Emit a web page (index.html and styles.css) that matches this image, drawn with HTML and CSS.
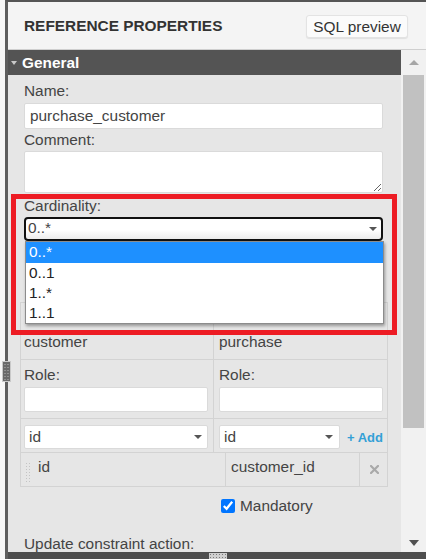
FILE: index.html
```html
<!DOCTYPE html>
<html lang="en">
<head>
<meta charset="utf-8">
<title>Reference properties</title>
<link rel="stylesheet" href="styles.css">
</head>
<body>
<div class="app">
  <div class="frame">
    <header class="hdr">
      <h1 class="hdr-title">REFERENCE PROPERTIES</h1>
      <button class="btn" type="button">SQL preview</button>
    </header>
    <div class="main">
      <div class="content">
        <div class="section-title"><span class="caret"></span>General</div>
        <div class="form">
          <label class="lbl">Name:</label>
          <input class="field" type="text" value="purchase_customer">
          <label class="lbl lbl-gap">Comment:</label>
          <textarea class="field area"></textarea>
          <label class="lbl lbl-gap2">Cardinality:</label>
          <div class="select focus">
            <span class="select-text">0..*</span>
            <span class="arrow arrow-card"></span>
            <ul class="dropdown">
              <li class="opt opt-first sel">0..*</li>
              <li class="opt">0..1</li>
              <li class="opt">1..*</li>
              <li class="opt">1..1</li>
            </ul>
          </div>

          <div class="reftable">
            <div class="cell c-left r1">customer</div>
            <div class="cell c-right r1">purchase</div>
            <div class="cell c-left r2">
              <span class="lbl">Role:</span>
              <input class="field small" type="text" value="">
            </div>
            <div class="cell c-right r2">
              <span class="lbl">Role:</span>
              <input class="field small" type="text" value="">
            </div>
            <div class="cell c-left r3">
              <div class="select plain wide"><span class="select-text">id</span><span class="arrow"></span></div>
            </div>
            <div class="cell c-right r3 addrow">
              <div class="select plain narrow"><span class="select-text">id</span><span class="arrow"></span></div>
              <a class="add" href="#">+ Add</a>
            </div>
          </div>

          <div class="coltable">
            <div class="cell col1"><span class="dots"></span><span class="coltext">id</span></div>
            <div class="cell col2">customer_id</div>
            <div class="cell col3">
              <svg class="remove" width="9" height="9" viewBox="0 0 9 9" aria-label="remove"><path d="M1 1 L8 8 M8 1 L1 8" stroke="#a9a9a9" stroke-width="2.2" stroke-linecap="square"/></svg>
            </div>
          </div>

          <div class="check-row">
            <input class="check" type="checkbox" checked id="mand">
            <label for="mand">Mandatory</label>
          </div>

          <label class="lbl lbl-update">Update constraint action:</label>
        </div>
      </div>
      <div class="scrollbar">
        <div class="sb-btn sb-up"><span class="tri-up"></span></div>
        <div class="sb-thumb"></div>
        <div class="sb-space"></div>
        <div class="sb-btn sb-down"><span class="tri-down"></span></div>
      </div>
    </div>
    <div class="footer-bar"></div>
  </div>
  <span class="side-grip"></span>
  <span class="bottom-grip"></span>
  <div class="annotation"></div>
</div>
</body>
</html>
```

FILE: styles.css
```css
* { box-sizing: border-box; }
html, body { margin: 0; padding: 0; }
body {
  width: 426px;
  height: 559px;
  overflow: hidden;
  background: #f7f7f7;
  font-family: "Liberation Sans", Arial, sans-serif;
  font-size: 15.4px;
  color: #444;
}
.app { position: relative; width: 426px; height: 559px; }
.frame {
  margin-left: 5px;
  height: 559px;
  border-left: 3px solid #5e5e5e;
  border-top: 2px solid #555;
  display: flex;
  flex-direction: column;
}
.hdr {
  height: 48px;
  flex: none;
  background: #f4f4f4;
  border-bottom: 1px solid #cfcfcf;
  display: flex;
  align-items: center;
  justify-content: space-between;
  padding: 0 18px 0 16px;
}
.hdr-title { margin: 0; font-size: 15.4px; font-weight: bold; color: #333; }
.btn {
  font-family: inherit;
  font-size: 15.4px;
  color: #333;
  background: #fbfbfb;
  border: 1px solid #e3e3e3;
  border-radius: 3px;
  height: 23px;
  width: 102px;
  padding: 0;
  margin-top: 2px;
  box-shadow: 0 1px 1px rgba(0,0,0,.08);
}
.main { flex: 1; min-height: 0; display: flex; }
.content { flex: 1; overflow: hidden; background: #e6e6e6; }
.section-title {
  height: 25px;
  background: #545454;
  color: #fff;
  font-weight: bold;
  display: flex;
  align-items: center;
  padding-left: 3px;
}
.caret {
  width: 0; height: 0;
  border-left: 3.5px solid transparent;
  border-right: 3.5px solid transparent;
  border-top: 4px solid #c8c8c8;
  margin-right: 5px;
}
.form { padding: 7px 18px 0 16px; }
.lbl { display: block; line-height: 18px; color: #444; }
.lbl-gap { margin-top: 2px; }
.lbl-gap2 { margin-top: 4px; }
.field {
  display: block;
  width: 100%;
  height: 26px;
  margin: 3px 0 0;
  border: 1px solid #dadada;
  border-radius: 2px;
  background: #fff;
  padding: 0 5px;
  font-family: inherit;
  font-size: 15.4px;
  color: #444;
  outline: none;
}
.area { height: 42px; margin-top: 2px; resize: vertical; padding: 3px 5px; }
.select {
  position: relative;
  display: flex;
  align-items: center;
  background: #fff;
  color: #444;
}
.select.focus {
  height: 24px;
  margin-top: 2px;
  border: 2px solid #111;
  border-radius: 4px;
  background: linear-gradient(#fff 55%, #ececec);
  padding: 0 4px 3px 2px;
}
.select-text { line-height: 18px; }
.arrow {
  margin-left: auto;
  width: 0; height: 0;
  border-left: 4.5px solid transparent;
  border-right: 4.5px solid transparent;
  border-top: 4.5px solid #555;
}
.arrow-card { margin-top: 3px; border-left-width: 4px; border-right-width: 4px; border-top-width: 4px; }
.dropdown {
  position: absolute;
  top: calc(100% + 2px);
  left: -1px;
  right: -3px;
  margin: 0;
  padding: 0;
  list-style: none;
  background: #fff;
  border: 1px solid #8c8c8c;
  box-shadow: 1px 2px 3px rgba(0,0,0,.35);
  z-index: 5;
}
.opt { line-height: 20px; padding: 0 3px; color: #222; }
.opt-first { padding-bottom: 1px; }
.opt.sel { background: #1e90ff; color: #fff; }

.reftable {
  margin: 61px -5px 0 -4px;
  display: grid;
  grid-template-columns: 193px 174px;
  grid-template-rows: 57px 59px 34px;
  border-top: 1px solid #d3d3d3;
  border-left: 1px solid #d3d3d3;
}
.cell { border-right: 1px solid #d3d3d3; border-bottom: 1px solid #d3d3d3; }
.c-left { padding-left: 3px; padding-right: 5px; }
.c-right { padding-left: 5px; padding-right: 4px; }
.r1 { padding-top: 30px; line-height: 18px; }
.r2 { padding-top: 6px; }
.field.small { height: 25px; }
.r3 { padding-top: 6px; }
.select.plain {
  height: 24px;
  border: 1px solid #dadada;
  border-radius: 2px;
  padding: 0 5px 0 4px;
}
.addrow { display: flex; align-items: flex-start; }
.select.narrow { width: 121px; }
.select.narrow .arrow { margin-right: 1px; }
.add {
  margin-left: 7px;
  margin-top: 6px;
  font-size: 13px;
  font-weight: bold;
  color: #33a0d6;
  text-decoration: none;
  line-height: 14px;
}

.coltable {
  margin: 0 -5px 0 -4px;
  display: grid;
  grid-template-columns: 205px 134px 28px;
  grid-template-rows: 34px;
  border-left: 1px solid #d3d3d3;
}
.col1 { display: flex; align-items: flex-start; padding: 5px 0 0 4px; line-height: 18px; }
.dots {
  width: 6px;
  height: 20px;
  margin-top: 4px;
  margin-right: 7px;
  background-image: radial-gradient(circle, #c4c4c4 0.8px, transparent 1px);
  background-size: 3px 3px;
}
.coltext { line-height: 18px; }
.col2 { padding: 5px 0 0 5px; line-height: 18px; }
.col3 { display: flex; align-items: center; justify-content: center; padding-left: 1px; }

.check-row { display: flex; align-items: center; height: 18px; margin: 10px 0 0 197px; }
.check { width: 14px; height: 14px; margin: 0 5px 0 0; }
.lbl-update { margin-top: 20px; white-space: nowrap; }

.scrollbar { width: 25px; flex: none; background: #f1f1f1; display: flex; flex-direction: column; }
.sb-btn { display: flex; align-items: center; justify-content: center; flex: none; }
.sb-up { height: 25px; }
.sb-down { height: 18px; }
.tri-up {
  width: 0; height: 0;
  border-left: 5.5px solid transparent;
  border-right: 5.5px solid transparent;
  border-bottom: 5.5px solid #a6a6a6;
}
.tri-down {
  width: 0; height: 0;
  border-left: 5.5px solid transparent;
  border-right: 5.5px solid transparent;
  border-top: 6px solid #505050;
}
.sb-thumb { height: 353px; margin: 0 2px; background: #c1c1c1; flex: none; }
.sb-space { flex: 1; }
.footer-bar { height: 7px; flex: none; background: #4e4e4e; }

.side-grip {
  position: absolute;
  left: 2px;
  top: 361px;
  width: 9px;
  height: 21px;
  background-color: #6a6a6a;
  background-image: radial-gradient(circle, #b8b8b8 0.8px, transparent 1px);
  background-size: 3px 3px;
  background-position: 0.5px 1px;
  border: 1px solid #c9c9c9;
}
.bottom-grip {
  position: absolute;
  left: 209px;
  top: 553px;
  width: 18px;
  height: 6px;
  background-color: #cfcfcf;
  background-image: radial-gradient(circle, #7a7a7a 0.7px, transparent 1px);
  background-size: 3px 3px;
}
.annotation {
  position: absolute;
  left: 11px;
  top: 194px;
  width: 386px;
  height: 141px;
  border: 5px solid #ed1c24;
  z-index: 10;
  pointer-events: none;
}
```
